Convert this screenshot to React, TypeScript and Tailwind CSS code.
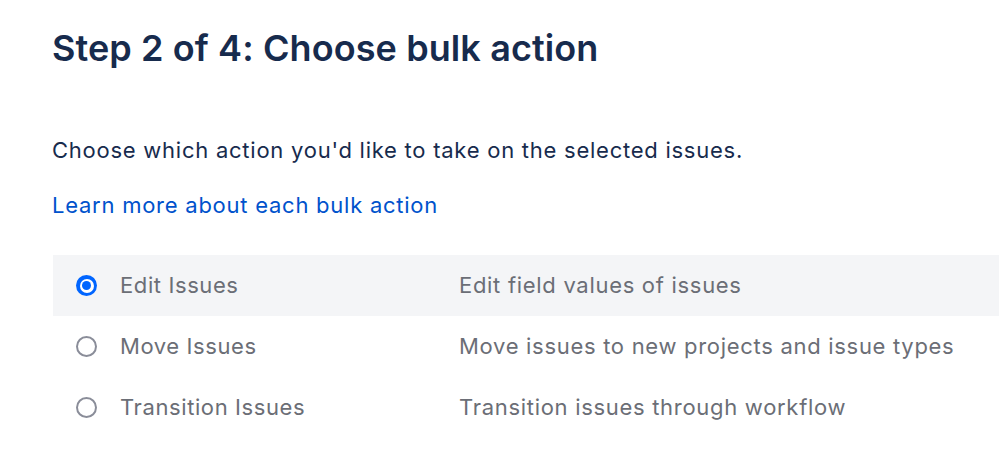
import React from "react";

const rows = [
  { label: "Edit Issues", desc: "Edit field values of issues", checked: true },
  { label: "Move Issues", desc: "Move issues to new projects and issue types", checked: false },
  { label: "Transition Issues", desc: "Transition issues through workflow", checked: false },
];

export default function App() {
  return (
    <div
      className="w-[999px] h-[458px] bg-white overflow-hidden"
      style={{ fontFamily: "Inter, 'Noto Sans', sans-serif" }}
    >
      <div className="pl-[52px] pt-[26px]">
        <h1 className="text-[36px] leading-[44px] font-semibold text-[#172B4D] tracking-[0.1px]">
          Step 2 of 4: Choose bulk action
        </h1>
        <p className="mt-[66px] text-[22px] leading-[28px] text-[#172B4D] tracking-[0.75px]">
          Choose which action you'd like to take on the selected issues.
        </p>
        <a className="block mt-[27px] text-[22px] leading-[28px] text-[#0052CC] tracking-[0.75px]">
          Learn more about each bulk action
        </a>
      </div>
      <div className="mt-[36px] ml-[53px] flex flex-col">
        {rows.map((r) => (
          <div
            key={r.label}
            className={`flex items-center h-[61px] ${r.checked ? "bg-[#F4F5F7]" : ""}`}
          >
            <div className="w-[67px] flex justify-center">
              {r.checked ? (
                <span className="w-[21px] h-[21px] rounded-full bg-[#0065FF] flex items-center justify-center">
                  <span className="w-[14px] h-[14px] rounded-full bg-white flex items-center justify-center">
                    <span className="w-[9px] h-[9px] rounded-full bg-[#0065FF]" />
                  </span>
                </span>
              ) : (
                <span className="w-[21px] h-[21px] rounded-full border-[2px] border-[#8A8D99]" />
              )}
            </div>
            <div className="w-[339px] text-[22px] text-[#6B6E76] tracking-[0.6px]">{r.label}</div>
            <div className="text-[22px] text-[#6B6E76] tracking-[0.7px]">{r.desc}</div>
          </div>
        ))}
      </div>
    </div>
  );
}
